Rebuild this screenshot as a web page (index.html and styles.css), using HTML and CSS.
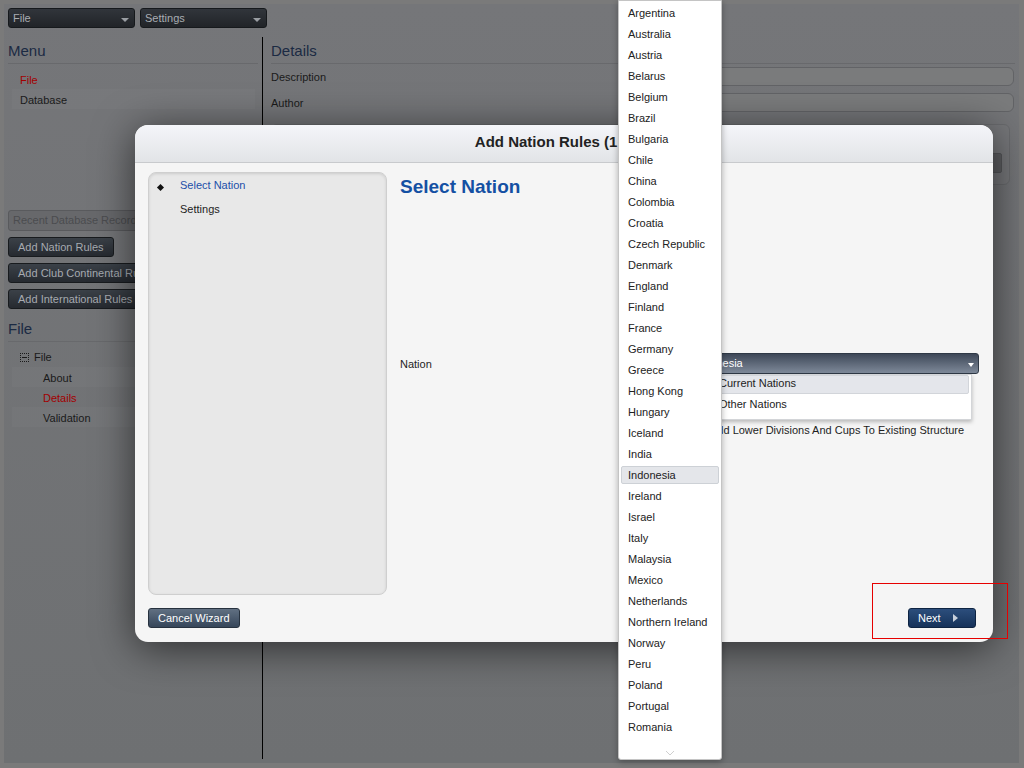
FILE: index.html
```html
<!DOCTYPE html>
<html lang="en">
<head>
<meta charset="utf-8">
<title>Add Nation Rules</title>
<link rel="stylesheet" href="styles.css">
</head>
<body>
<div class="app">
  <div class="toolbar">
    <div class="tsel"><span>File</span><span class="caret"></span></div>
    <div class="tsel"><span>Settings</span><span class="caret"></span></div>
  </div>
  <div class="main">
    <aside class="side">
      <h2 class="sect">Menu</h2>
      <ul class="menu">
        <li class="red">File</li>
        <li class="alt">Database</li>
      </ul>
      <div class="btns">
        <div class="abtn dis">Recent Database Records</div>
        <div class="abtn">Add Nation Rules</div>
        <div class="abtn">Add Club Continental Rules</div>
        <div class="abtn">Add International Rules</div>
      </div>
      <h2 class="sect second">File</h2>
      <ul class="tree">
        <li class="root"><span class="ticon"></span>File</li>
        <li class="leaf alt">About</li>
        <li class="leaf red">Details</li>
        <li class="leaf alt">Validation</li>
      </ul>
    </aside>
    <section class="content">
      <h2 class="sect">Details</h2>
      <div class="frow"><span class="flabel">Description</span><span class="inp"></span></div>
      <div class="frow second"><span class="flabel">Author</span><span class="inp"></span></div>
      <div class="panel"><span class="pbtn"></span></div>
    </section>
  </div>
</div>

<div class="modal">
  <div class="mhead">Add Nation Rules (1 of 2)</div>
  <div class="mbody">
    <div class="steps">
      <div class="step active"><span class="diamond"></span>Select Nation</div>
      <div class="step">Settings</div>
    </div>
    <div class="pane">
      <h1 class="ptitle">Select Nation</h1>
      <div class="nrow">
        <span class="nlabel">Nation</span>
        <div class="nsel">
          <span>Indonesia</span>
          <span class="warrow"></span>
          <div class="popup">
            <div class="opt on">Current Nations</div>
            <div class="opt">Other Nations</div>
          </div>
        </div>
      </div>
      <div class="crow">
        <span class="nlabel"></span>
        <span class="cbox"></span>
        <span>Add Lower Divisions And Cups To Existing Structure</span>
      </div>
    </div>
  </div>
  <div class="mfoot">
    <div class="mbtn cancel">Cancel Wizard</div>
    <div class="mbtn next">Next<span class="tri"></span></div>
  </div>
</div>

<div class="nlist">
  <ul>
    <li>Argentina</li>
    <li>Australia</li>
    <li>Austria</li>
    <li>Belarus</li>
    <li>Belgium</li>
    <li>Brazil</li>
    <li>Bulgaria</li>
    <li>Chile</li>
    <li>China</li>
    <li>Colombia</li>
    <li>Croatia</li>
    <li>Czech Republic</li>
    <li>Denmark</li>
    <li>England</li>
    <li>Finland</li>
    <li>France</li>
    <li>Germany</li>
    <li>Greece</li>
    <li>Hong Kong</li>
    <li>Hungary</li>
    <li>Iceland</li>
    <li>India</li>
    <li class="on">Indonesia</li>
    <li>Ireland</li>
    <li>Israel</li>
    <li>Italy</li>
    <li>Malaysia</li>
    <li>Mexico</li>
    <li>Netherlands</li>
    <li>Northern Ireland</li>
    <li>Norway</li>
    <li>Peru</li>
    <li>Poland</li>
    <li>Portugal</li>
    <li>Romania</li>
  </ul>
  <div class="more">
    <svg width="10" height="6" viewBox="0 0 10 6"><path d="M1 1 L5 5 L9 1" fill="none" stroke="#cfcfcf" stroke-width="1"/></svg>
  </div>
</div>

<div class="hl"></div>
</body>
</html>
```

FILE: styles.css
```css
html, body {
  margin: 0;
  padding: 0;
}
body {
  width: 1024px;
  height: 768px;
  overflow: hidden;
  position: relative;
  background: #7a7a7a;
  font-family: "Liberation Sans", Arial, Helvetica, sans-serif;
  font-size: 11px;
  color: #1a1a1a;
}
ul {
  list-style: none;
  margin: 0;
  padding: 0;
}

/* ---------- dimmed application behind the wizard ---------- */
.app {
  margin: 4px 5px 0 4px;
  height: 759px;
  box-sizing: border-box;
  padding: 4px 4px 4px 4px;
  background: linear-gradient(#757679, #6e7072);
  display: flex;
  flex-direction: column;
}
.toolbar {
  display: flex;
  gap: 5px;
  height: 20px;
  margin-bottom: 9px;
  flex: none;
}
.tsel {
  width: 127px;
  height: 20px;
  box-sizing: border-box;
  border: 1px solid #16191c;
  border-radius: 3px;
  background: linear-gradient(#31353b, #212428);
  color: #a9adb2;
  padding: 0 5px 0 4px;
  display: flex;
  align-items: center;
  justify-content: space-between;
}
.caret {
  width: 0;
  height: 0;
  border-left: 4px solid transparent;
  border-right: 4px solid transparent;
  border-top: 4px solid #9a9ea3;
  margin-top: 3px;
}
.main {
  display: flex;
  flex: 1;
  min-height: 0;
}
.side {
  width: 250px;
  flex: none;
  margin-right: 4px;
}
.content {
  flex: 1;
  border-left: 1px solid #000;
  padding-left: 8px;
}
.sect {
  margin: 5px 0 0;
  font-size: 15px;
  font-weight: normal;
  line-height: 18px;
  padding-bottom: 3px;
  border-bottom: 1px solid #68696c;
  color: #1b2a43;
}
.side .sect.second {
  margin-top: 11px;
}
.menu, .tree {
  margin-top: 5px;
  padding: 0 3px 0 4px;
}
.menu li, .tree li {
  height: 20px;
  line-height: 20px;
  padding-top: 1px;
  box-sizing: border-box;
  padding-left: 8px;
  color: #1a1a1a;
}
.menu li.alt, .tree li.alt {
  background: rgba(255, 255, 255, 0.025);
}
.menu li.red, .tree li.red {
  color: #a30000;
}
.tree li.root {
  display: flex;
  align-items: center;
  padding-top: 0;
}
.tree li.leaf {
  padding-left: 31px;
}
.ticon {
  width: 9px;
  height: 9px;
  box-sizing: border-box;
  border: 1px dotted #1a1a1a;
  margin-right: 5px;
  display: flex;
  align-items: center;
  justify-content: center;
}
.ticon::after {
  content: "";
  width: 5px;
  height: 1px;
  background: #1a1a1a;
}
.btns {
  margin-top: 101px;
  display: flex;
  flex-direction: column;
  align-items: flex-start;
  gap: 6px;
}
.abtn {
  height: 20px;
  box-sizing: border-box;
  line-height: 18px;
  padding: 0 9px;
  border: 1px solid #181b1e;
  border-radius: 3px;
  background: linear-gradient(#3b4148, #262a30);
  color: #a6aab0;
  white-space: nowrap;
}
.abtn.dis {
  height: 21px;
  line-height: 19px;
  background: #67686b;
  border-color: #595a5d;
  color: #4b4c4f;
  padding-left: 4px;
}
.frow {
  display: flex;
  height: 19px;
  margin-top: 3px;
}
.frow.second {
  margin-top: 7px;
}
.flabel {
  width: 369px;
  line-height: 19px;
  padding-top: 1px;
  flex: none;
}
.inp {
  flex: 1;
  margin-right: 1px;
  border: 1px solid #626366;
  border-radius: 6px;
  background: #7a7b7c;
}
.panel {
  margin: 12px 5px 0 0;
  height: 61px;
  box-sizing: border-box;
  border: 1px solid #6a6b6e;
  border-radius: 6px;
  background: #76777a;
  display: flex;
  justify-content: flex-end;
  align-items: flex-start;
  padding: 28px 7px 0 0;
}
.pbtn {
  width: 50px;
  height: 20px;
  box-sizing: border-box;
  background: #5e5f62;
  border: 1px solid #555659;
  border-radius: 2px;
}

/* ---------- wizard dialog ---------- */
.modal {
  position: absolute;
  left: 135px;
  top: 125px;
  width: 858px;
  height: 517px;
  box-sizing: border-box;
  background: #f5f5f5;
  border-radius: 13px;
  box-shadow: 0 6px 40px rgba(0, 0, 0, 0.6);
  display: flex;
  flex-direction: column;
}
.mhead {
  height: 37px;
  box-sizing: content-box;
  border-bottom: 1px solid #c8cacd;
  background: linear-gradient(#f4f5f9, #e2e4e7);
  border-radius: 13px 13px 0 0;
  text-align: center;
  font-weight: bold;
  font-size: 15px;
  line-height: 33px;
  color: #222;
  flex: none;
}
.mbody {
  display: flex;
  padding: 9px 13px 0;
  flex: none;
}
.steps {
  width: 239px;
  height: 423px;
  box-sizing: border-box;
  border: 1px solid #cfcfcf;
  border-radius: 8px;
  background: #e8e8e8;
  box-shadow: inset 0 1px 3px rgba(0, 0, 0, 0.12);
}
.step {
  height: 24px;
  line-height: 24px;
  padding-left: 31px;
  color: #1e1e1e;
  display: flex;
  align-items: center;
}
.step.active {
  padding-left: 9px;
  color: #1d4fa8;
}
.diamond {
  width: 5px;
  height: 5px;
  background: #111;
  transform: rotate(45deg);
  margin: 4px 17px 0 0;
  flex: none;
}
.pane {
  margin-left: 13px;
  width: 580px;
}
.ptitle {
  margin: 4px 0 0;
  font-size: 19px;
  line-height: 22px;
  font-weight: bold;
  color: #1450a3;
}
.nrow {
  display: flex;
  align-items: center;
  margin-top: 155px;
  height: 21px;
}
.nlabel {
  width: 288px;
  flex: none;
  color: #1e1e1e;
}
.nsel {
  position: relative;
  width: 291px;
  height: 21px;
  box-sizing: border-box;
  border: 1px solid #2f3946;
  border-radius: 3px;
  background: linear-gradient(#3e4858, #7e8999);
  color: #fff;
  padding-left: 6px;
  line-height: 19px;
}
.warrow {
  position: absolute;
  right: 4px;
  top: 9px;
  width: 0;
  height: 0;
  border-left: 3px solid transparent;
  border-right: 3px solid transparent;
  border-top: 4px solid #fff;
}
.popup {
  position: absolute;
  top: 20px;
  left: 23px;
  width: 260px;
  box-sizing: border-box;
  background: #fff;
  border: 1px solid #d3d5d8;
  box-shadow: 0 2px 4px rgba(0, 0, 0, 0.25);
  padding: 0 2px 2px;
  color: #222;
  line-height: 15px;
}
.opt {
  height: 19px;
  box-sizing: border-box;
  border: 1px solid transparent;
  padding-left: 3px;
  margin-bottom: 2px;
}
.opt.on {
  background: #e4e6eb;
  border-color: #d2d5da;
  border-radius: 2px;
}
.crow {
  display: flex;
  align-items: center;
  margin-top: 47px;
  height: 18px;
  color: #1e1e1e;
}
.cbox {
  width: 12px;
  height: 12px;
  box-sizing: border-box;
  border: 1px solid #9a9a9a;
  border-radius: 2px;
  background: #fff;
  margin: 0 7px 0 3px;
}
.mfoot {
  display: flex;
  justify-content: space-between;
  padding: 13px 17px 0 13px;
}
.mbtn {
  height: 20px;
  box-sizing: border-box;
  border: 1px solid;
  border-radius: 3px;
  color: #fff;
  line-height: 18px;
  padding: 0 9px;
  white-space: nowrap;
}
.mbtn.cancel {
  background: linear-gradient(#617082, #36465a);
  border-color: #27323f;
}
.mbtn.next {
  width: 68px;
  display: flex;
  align-items: center;
  background: linear-gradient(#2c4e7c, #16325a);
  border-color: #0e2442;
}
.tri {
  width: 0;
  height: 0;
  border-top: 4px solid transparent;
  border-bottom: 4px solid transparent;
  border-left: 5px solid #c8d0dc;
  margin-left: 12px;
}

/* ---------- open nation dropdown list ---------- */
.nlist {
  position: absolute;
  left: 618px;
  top: 0;
  width: 104px;
  height: 760px;
  box-sizing: border-box;
  border: 1px solid #c4c4c4;
  border-radius: 0 0 3px 3px;
  background: #fff;
  box-shadow: 0 2px 6px rgba(0, 0, 0, 0.3);
  padding-top: 3px;
  display: flex;
  flex-direction: column;
}
.nlist li {
  height: 18px;
  box-sizing: border-box;
  line-height: 16px;
  margin: 0 2px 3px;
  padding-left: 6px;
  border: 1px solid transparent;
  color: #222;
  white-space: nowrap;
}
.nlist li.on {
  background: #e4e6ea;
  border-color: #cdd1d6;
  border-radius: 2px;
}
.more {
  margin-top: auto;
  height: 6px;
  padding-bottom: 3px;
  display: flex;
  justify-content: center;
}
.more svg {
  display: block;
}

/* ---------- annotation box ---------- */
.hl {
  position: absolute;
  left: 872px;
  top: 583px;
  width: 136px;
  height: 56px;
  box-sizing: border-box;
  border: 1px solid #e60000;
}
```
